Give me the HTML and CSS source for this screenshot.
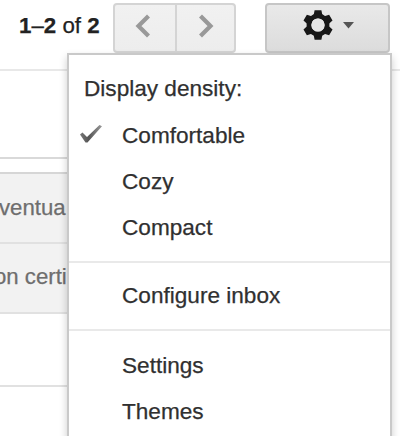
FILE: index.html
```
<!DOCTYPE html>
<html lang="en">
<head>
<meta charset="utf-8">
<title>Mail</title>
<link rel="stylesheet" href="styles.css">
</head>
<body>
<header class="toolbar">
  <div class="count"><b>1</b>–<b>2</b> of <b>2</b></div>
  <div class="pager">
    <button aria-label="Newer"><svg width="16" height="24" viewBox="0 0 16 24"><path d="M13.5 2 3.5 12l10 10"/></svg></button>
    <button aria-label="Older"><svg width="16" height="24" viewBox="0 0 16 24"><path d="M2.5 2 12.5 12 2.5 22"/></svg></button>
  </div>
  <button class="gear" aria-label="Settings">
    <svg class="cog" width="30" height="32" viewBox="-15 -16 30 32"><g fill="#171717"><g id="tooth"><path d="M-3.4-14.8h6.8l1 5h-8.8zM-3.4 14.8h6.8l1-5h-8.8z"/></g><use href="#tooth" transform="rotate(60)"/><use href="#tooth" transform="rotate(120)"/></g><circle r="9" fill="none" stroke="#171717" stroke-width="4.8"/><circle r="6.6" fill="#e5e5e5"/></svg>
    <svg class="caret" width="11" height="7" viewBox="0 0 11 7"><path d="M0 0h11L5.5 6.5z" fill="#555"/></svg>
  </button>
</header>
<main class="mail">
  <div class="band"></div>
  <div class="gap"></div>
  <div class="row first">ventua</div>
  <div class="row second">on certi</div>
  <div class="blank"></div>
</main>
<nav class="menu">
  <div class="title">Display density:</div>
  <div class="item checked"><svg width="24" height="20" viewBox="0 0 24 20"><defs><linearGradient id="tick" x1="0" x2="1"><stop offset="0" stop-color="#777"/><stop offset=".4" stop-color="#555"/><stop offset="1" stop-color="#999"/></linearGradient></defs><path d="M1 10.5 3.5 8.5 8 13 20.5 1 23 2.2 8.5 18.5H6.5z" fill="url(#tick)"/></svg>Comfortable</div>
  <div class="item">Cozy</div>
  <div class="item">Compact</div>
  <hr>
  <div class="item">Configure inbox</div>
  <hr>
  <div class="item">Settings</div>
  <div class="item">Themes</div>
</nav>
</body>
</html>
```
FILE: styles.css
```
* { box-sizing: border-box; }
body {
  margin: 0;
  height: 436px;
  overflow: hidden;
  position: relative;
  background: #fff;
  color: #303030;
  font: 22.6px/46px "Liberation Sans", Arial, sans-serif;
  -webkit-text-stroke: .25px;
}
.toolbar {
  display: flex;
  height: 71px;
  padding: 3px 10px 0 19px;
  border-bottom: 2px solid #e8e8e8;
}
.count { width: 94px; color: #222; font-size: 22.3px; line-height: 45px; white-space: nowrap; }
.pager { display: flex; width: 123px; height: 50px; }
button {
  display: flex;
  align-items: center;
  justify-content: center;
  margin: 0;
  padding: 0;
  border: 2px solid #d4d4d4;
  background: linear-gradient(#f1f1f1, #ededed);
}
.pager button { width: 62px; padding-bottom: 5px; padding-left: 2px; }
.pager button:first-child { width: 64px; border-radius: 4px 0 0 4px; padding: 0 4px 5px 0; }
.pager button:last-child { border-radius: 0 4px 4px 0; margin-left: -2px; }
.pager path { fill: none; stroke: #999; stroke-width: 4.2; }
.gear {
  width: 125px;
  height: 50px;
  margin-left: auto;
  justify-content: flex-start;
  padding: 0 0 6px 36px;
  border-color: #c6c6c6;
  border-radius: 4px;
  background: linear-gradient(#e9e9e9, #dcdcdc);
}
.caret { margin-left: 10px; }
.mail { width: 68px; }
.band { height: 88px; border-bottom: 2px solid #d9d9d9; }
.gap { height: 13px; }
.row { height: 70px; background: #f2f2f2; color: #6e6e6e; font-size: 22.2px; white-space: nowrap; border-top: 2px solid #e1e1e1; }
.first { border-top-color: #d6d6d6; line-height: 67px; text-indent: -1px; }
.second { height: 72px; text-indent: -6px; border-bottom: 2px solid #e1e1e1; line-height: 66px; }
.blank { height: 73px; border-bottom: 2px solid #e1e1e1; }
.menu {
  position: absolute;
  left: 67px;
  top: 53px;
  width: 325px;
  height: 400px;
  padding-top: 11px;
  border: 2px solid #c9c9c9;
  background: #fff;
  box-shadow: 0 4px 8px rgba(0, 0, 0, .2);
}
.title { height: 46px; padding-left: 15px; }
.item { position: relative; height: 46px; padding-left: 53px; }
.checked { margin-top: 1px; }
.checked svg { position: absolute; left: 10px; top: 11px; }
.menu hr { height: 2px; margin: 10px 0; border: 0; background: #e9e9e9; }
.menu hr + .item + hr { margin-bottom: 12px; }
```
